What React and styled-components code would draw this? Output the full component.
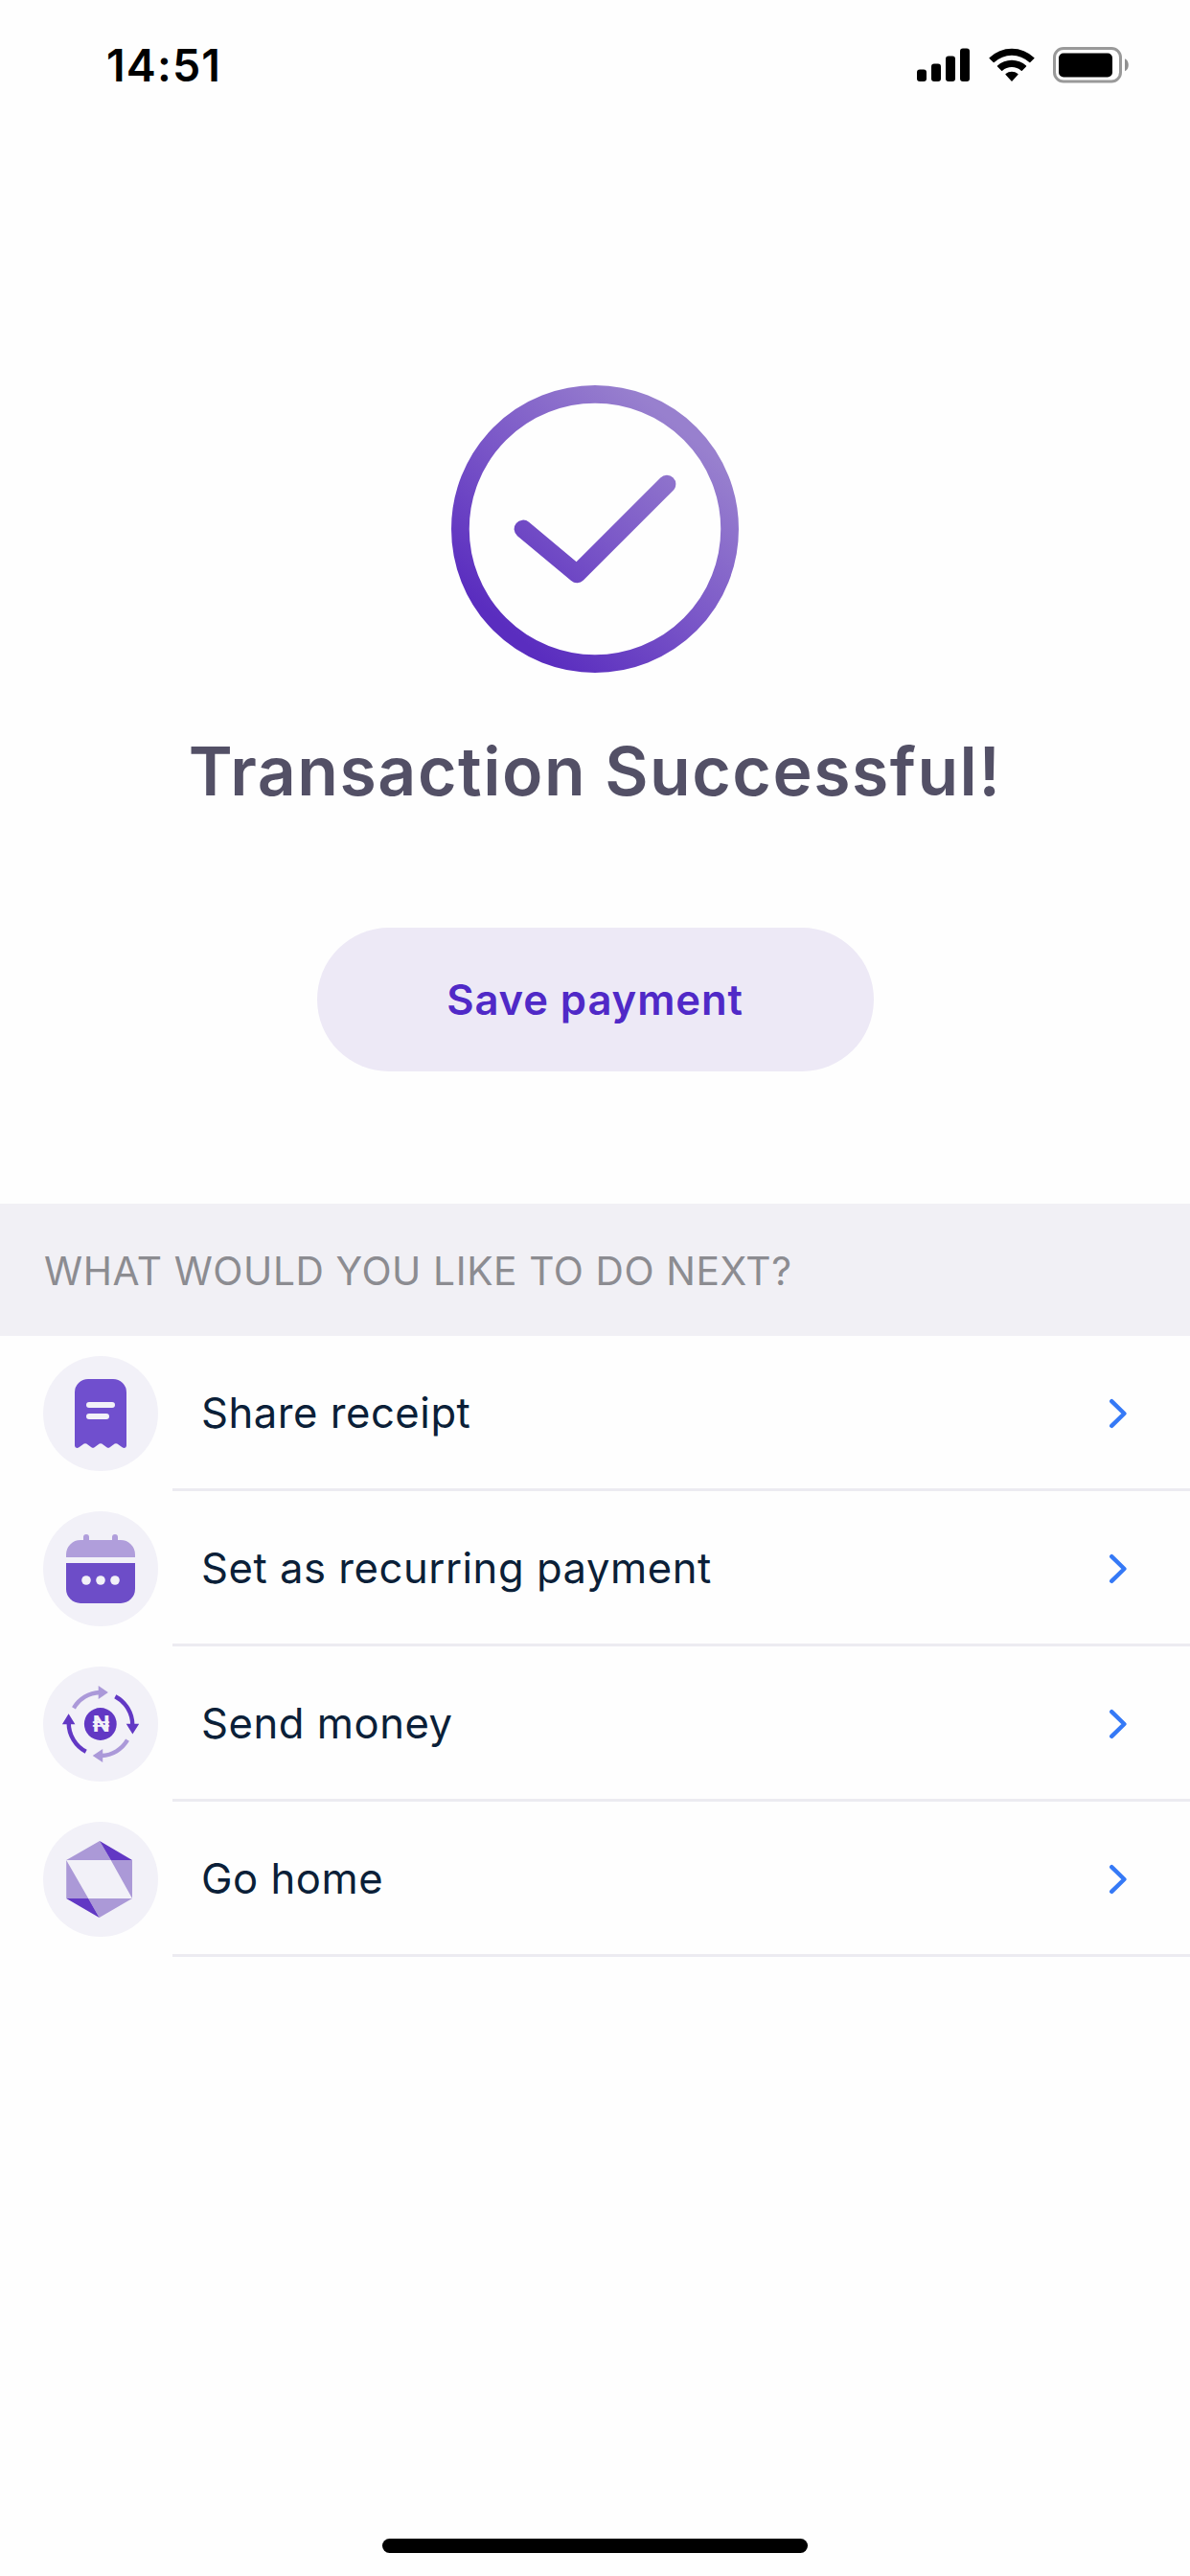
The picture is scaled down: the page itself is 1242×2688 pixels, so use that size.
import React from "react";
import styled, { createGlobalStyle } from "styled-components";

const GlobalStyle = createGlobalStyle`
  * { box-sizing: border-box; }
  body { margin: 0; background: #fefefe; }
`;

const Screen = styled.div`
  display: flex;
  flex-direction: column;
  width: 1242px;
  height: 2688px;
  overflow: hidden;
  background: #fefefe;
  font-family: Inter, "Liberation Sans", sans-serif;
`;

const StatusBar = styled.header`
  display: flex;
  justify-content: space-between;
  align-items: center;
  height: 136px;
  padding: 0 63px 0 111px;
`;

const Time = styled.span`
  font-size: 46.5px;
  font-weight: 600;
  line-height: 60px;
  letter-spacing: 1.15px;
  color: #000;
`;

const StatusIcons = styled.div`
  display: flex;
  align-items: center;
`;

const Glyph = styled.svg`
  display: block;
  flex: none;
  margin-left: ${(p) => p.$gap || 0}px;
`;

const Hero = styled.main`
  display: flex;
  flex-direction: column;
  align-items: center;
  height: 1120px;
  padding-top: 266px;
`;

const Title = styled.h1`
  margin: 58px 0 0;
  font-size: 69.7px;
  font-weight: 600;
  line-height: 90px;
  letter-spacing: 1.53px;
  white-space: nowrap;
  color: #535066;
`;

const SaveButton = styled.button`
  width: 581px;
  height: 150px;
  margin-top: 118px;
  padding: 0;
  border: 0;
  border-radius: 75px;
  background: #ede9f6;
  color: #5029c7;
  font-family: inherit;
  font-size: 43.6px;
  font-weight: 600;
  letter-spacing: 0.9px;
`;

const SectionHeader = styled.h2`
  display: flex;
  align-items: center;
  height: 138px;
  margin: 0;
  padding: 2px 0 0 46px;
  background: #f1f0f5;
  color: #8c8c91;
  font-size: 40.7px;
  font-weight: 400;
  letter-spacing: 0.6px;
  white-space: nowrap;
`;

const ActionList = styled.nav`
  display: flex;
  flex-direction: column;
`;

const ActionRow = styled.div`
  display: flex;
  height: 162px;
  padding-left: 45px;
`;

const IconBadge = styled.div`
  flex: none;
  width: 120px;
  height: 120px;
  margin-top: ${(p) => p.$top}px;
  border-radius: 50%;
  background: #f2f1f8;
`;

const RowBody = styled.div`
  display: flex;
  flex: 1;
  align-items: center;
  justify-content: space-between;
  margin-left: 15px;
  padding: 3px 64px 0 30px;
  border-bottom: 3px solid #ecebf1;
`;

const RowLabel = styled.span`
  font-size: 43.6px;
  line-height: 56px;
  letter-spacing: 0.53px;
  color: #0b1f38;
`;

const HomeIndicator = styled.div`
  width: 444px;
  height: 15px;
  margin: auto auto 24px;
  border-radius: 8px;
  background: #000;
`;

const SignalIcon = () => (
  <Glyph width="55" height="36" viewBox="0 0 55 36">
    <rect x="0" y="22.5" width="10" height="12.5" rx="3" />
    <rect x="15" y="16.5" width="10" height="18.5" rx="3" />
    <rect x="30" y="8.5" width="10" height="26.5" rx="3" />
    <rect x="45" y="0.5" width="10" height="34.5" rx="3" />
  </Glyph>
);

const WifiIcon = () => (
  <Glyph $gap={19.5} width="48" height="36" viewBox="0 0 48 36">
    <path d="M0.6 10.2A33.8 33.8 0 0 1 47.4 10.2Q47.8 10.6 47.4 11.1L43.3 15.1Q42.8 15.6 42.3 15.1A26.6 26.6 0 0 0 5.7 15.1Q5.2 15.6 4.7 15.1L0.6 11.1Q0.2 10.6 0.6 10.2Z" />
    <path d="M9 18.6A22 22 0 0 1 39 18.6Q39.5 19.1 39 19.6L34.8 23.8Q34.3 24.2 33.8 23.8A14.7 14.7 0 0 0 14.2 23.8Q13.7 24.2 13.2 23.8L9 19.6Q8.5 19.1 9 18.6Z" />
    <path d="M17.6 27.1A10 10 0 0 1 30.4 27.1Q30.9 27.6 30.4 28.1L24.5 34.4Q24 34.9 23.5 34.4L17.6 28.1Q17.1 27.6 17.6 27.1Z" />
  </Glyph>
);

const BatteryIcon = () => (
  <Glyph $gap={19.5} width="80" height="38" viewBox="0 0 80 38">
    <rect x="1.5" y="1.5" width="69" height="34.5" rx="9.5" fill="none" stroke="#999" strokeWidth="3" />
    <rect x="6" y="6.5" width="56" height="25" rx="5" />
    <path d="M75 12.2C80 14 80 23.5 75 25.3Z" fill="#909090" />
  </Glyph>
);

const SuccessIcon = () => (
  <Glyph width="300" height="300" viewBox="0 0 300 300">
    <defs>
      <linearGradient id="success" gradientUnits="userSpaceOnUse" x1="60" y1="255" x2="240" y2="45">
        <stop offset="0" stopColor="#5a2dbf" />
        <stop offset="0.5" stopColor="#7b58c8" />
        <stop offset="1" stopColor="#9880ce" />
      </linearGradient>
    </defs>
    <g fill="none" stroke="url(#success)" strokeWidth="18.75" strokeLinecap="round" strokeLinejoin="round">
      <circle cx="150" cy="150" r="140.6" />
      <path d="M75 150L131.2 196.9L225 103.1" />
    </g>
  </Glyph>
);

const ReceiptIcon = () => (
  <Glyph width="120" height="120" viewBox="0 0 120 120">
    <path
      fill="#704fce"
      d="M33 38A14 14 0 0 1 47 24H73A14 14 0 0 1 87 38V93.6Q87 96 84.6 96Q83.6 96 82.6 95.3L77.3 91.6Q76 90.8 74.7 91.6L69.6 95.2Q68 96.4 66.4 95.2L61.3 91.6Q60 90.8 58.7 91.6L53.6 95.2Q52 96.4 50.4 95.2L45.3 91.6Q44 90.8 42.7 91.6L37.4 95.3Q36.4 96 35.4 96Q33 96 33 93.6Z"
    />
    <path d="M48 51H72M48 63H66" stroke="#f2f1f8" strokeWidth="6" strokeLinecap="round" />
  </Glyph>
);

const CalendarIcon = () => (
  <Glyph width="120" height="120" viewBox="0 0 120 120">
    <path
      fill="#b09edb"
      d="M24 48V45A15 15 0 0 1 39 30H42V27A3 3 0 0 1 48 27V30H72V27A3 3 0 0 1 78 27V30H81A15 15 0 0 1 96 45V48Z"
    />
    <path fill="#6d4dc8" d="M24 54H96V81A15 15 0 0 1 81 96H39A15 15 0 0 1 24 81Z" />
    <g fill="#f2f1f8">
      <circle cx="45" cy="72" r="4.8" />
      <circle cx="60" cy="72" r="4.8" />
      <circle cx="75" cy="72" r="4.8" />
    </g>
  </Glyph>
);

const SendIcon = () => (
  <Glyph width="120" height="120" viewBox="0 0 120 120">
    <g fill="none" strokeWidth="4.4">
      <path d="M32 43.3A33 33 0 0 1 59 27" stroke="#ab99d9" />
      <path d="M88 76.7A33 33 0 0 1 61 93" stroke="#ab99d9" />
      <path d="M75.3 31.2A34 34 0 0 1 93.3 61" stroke="#6238c4" />
      <path d="M44.7 88.8A34 34 0 0 1 26.7 59" stroke="#6238c4" />
    </g>
    <path fill="#ab99d9" d="M57.7 20L67.9 27L57.7 34ZM62.2 86V100L51.7 93Z" />
    <path fill="#6238c4" d="M86.7 59.8H100.2L93.4 70.5ZM19.9 60.2H33.4L26.6 49.3Z" />
    <circle cx="59.8" cy="60" r="16.9" fill="#6238c4" />
    <text
      x="60.4"
      y="68.2"
      textAnchor="middle"
      fill="#f2f1f8"
      fontFamily="Inter, sans-serif"
      fontSize="23.5"
      fontWeight="700"
    >
      ₦
    </text>
  </Glyph>
);

const HomeIcon = () => (
  <Glyph width="120" height="120" viewBox="0 0 120 120">
    <path fill="#ab99d7" d="M59 20L70.7 40H24.2ZM93 40V80L70.7 40ZM24.2 40L47.2 80H24.2ZM47.2 80H93L58.6 100Z" />
    <path fill="#6238c4" d="M59 20L93 40H70.7ZM24.2 80H47.2L58.6 100Z" />
  </Glyph>
);

const Chevron = () => (
  <Glyph width="20" height="32" viewBox="0 0 20 32">
    <path
      d="M2.2 3.2L15.4 16L2.2 28.8"
      fill="none"
      stroke="#3579f6"
      strokeWidth="4.4"
      strokeLinecap="round"
      strokeLinejoin="round"
    />
  </Glyph>
);

const actions = [
  { label: "Share receipt", Icon: ReceiptIcon, top: 21 },
  { label: "Set as recurring payment", Icon: CalendarIcon, top: 21 },
  { label: "Send money", Icon: SendIcon, top: 21 },
  { label: "Go home", Icon: HomeIcon, top: 21 },
];

export default function App() {
  return (
    <Screen>
      <GlobalStyle />
      <StatusBar>
        <Time>14:51</Time>
        <StatusIcons>
          <SignalIcon />
          <WifiIcon />
          <BatteryIcon />
        </StatusIcons>
      </StatusBar>
      <Hero>
        <SuccessIcon />
        <Title>Transaction Successful!</Title>
        <SaveButton>Save payment</SaveButton>
      </Hero>
      <SectionHeader>WHAT WOULD YOU LIKE TO DO NEXT?</SectionHeader>
      <ActionList>
        {actions.map(({ label, Icon, top }) => (
          <ActionRow key={label}>
            <IconBadge $top={top}>
              <Icon />
            </IconBadge>
            <RowBody>
              <RowLabel>{label}</RowLabel>
              <Chevron />
            </RowBody>
          </ActionRow>
        ))}
      </ActionList>
      <HomeIndicator />
    </Screen>
  );
}
